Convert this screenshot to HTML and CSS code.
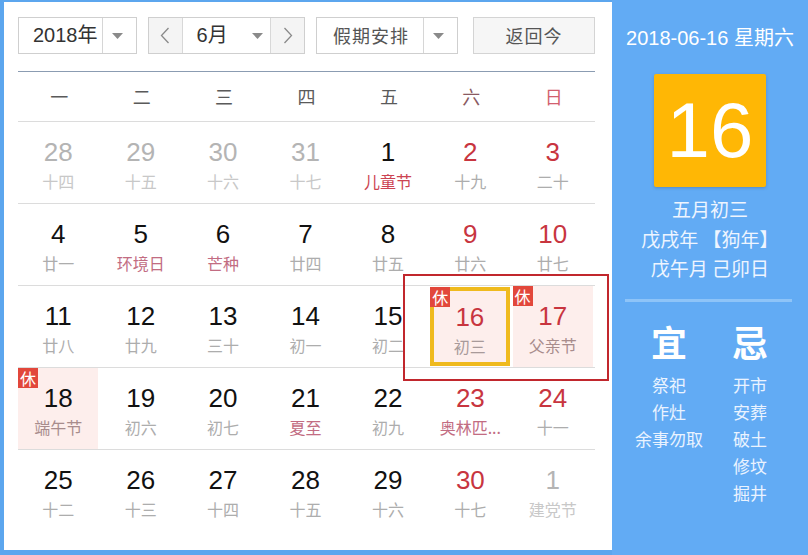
FILE: index.html
```html
<!DOCTYPE html>
<html lang="zh-CN">
<head>
<meta charset="utf-8">
<title>万年历</title>
<link rel="stylesheet" href="styles.css">
</head>
<body>
<div class="app">
  <div class="main">
    <div class="controls">
      <div class="select year">
        <span class="sel-text">2018年</span>
        <span class="sel-arrow"><svg width="11" height="6" viewBox="0 0 11 6"><path d="M0 0H11L5.5 6Z" fill="#8a8a8a"/></svg></span>
      </div>
      <div class="select month">
        <span class="nav-btn"><svg width="10" height="17" viewBox="0 0 10 17"><path d="M8.5 1L1.5 8.5L8.5 16" fill="none" stroke="#8a8a8a" stroke-width="1.3"/></svg></span>
        <span class="month-mid"><span class="sel-text">6月</span><svg class="mid-arrow" width="11" height="6" viewBox="0 0 11 6"><path d="M0 0H11L5.5 6Z" fill="#8a8a8a"/></svg></span>
        <span class="nav-btn"><svg width="10" height="17" viewBox="0 0 10 17"><path d="M1.5 1L8.5 8.5L1.5 16" fill="none" stroke="#8a8a8a" stroke-width="1.3"/></svg></span>
      </div>
      <div class="select holiday">
        <span class="sel-text">假期安排</span>
        <span class="sel-arrow"><svg width="11" height="6" viewBox="0 0 11 6"><path d="M0 0H11L5.5 6Z" fill="#8a8a8a"/></svg></span>
      </div>
      <div class="btn-today">返回今</div>
    </div>

    <div class="week-head">
      <span>一</span><span>二</span><span>三</span><span>四</span><span>五</span><span class="sat">六</span><span class="sun">日</span>
    </div>

    <div class="row">
      <div class="cell other"><div class="num">28</div><div class="lunar">十四</div></div>
      <div class="cell other"><div class="num">29</div><div class="lunar">十五</div></div>
      <div class="cell other"><div class="num">30</div><div class="lunar">十六</div></div>
      <div class="cell other"><div class="num">31</div><div class="lunar">十七</div></div>
      <div class="cell"><div class="num">1</div><div class="lunar fest red">儿童节</div></div>
      <div class="cell weekend"><div class="num">2</div><div class="lunar">十九</div></div>
      <div class="cell weekend"><div class="num">3</div><div class="lunar">二十</div></div>
    </div>
    <div class="row">
      <div class="cell"><div class="num">4</div><div class="lunar">廿一</div></div>
      <div class="cell"><div class="num">5</div><div class="lunar fest">环境日</div></div>
      <div class="cell"><div class="num">6</div><div class="lunar fest">芒种</div></div>
      <div class="cell"><div class="num">7</div><div class="lunar">廿四</div></div>
      <div class="cell"><div class="num">8</div><div class="lunar">廿五</div></div>
      <div class="cell weekend"><div class="num">9</div><div class="lunar">廿六</div></div>
      <div class="cell weekend"><div class="num">10</div><div class="lunar">廿七</div></div>
    </div>
    <div class="row">
      <div class="cell"><div class="num">11</div><div class="lunar">廿八</div></div>
      <div class="cell"><div class="num">12</div><div class="lunar">廿九</div></div>
      <div class="cell"><div class="num">13</div><div class="lunar">三十</div></div>
      <div class="cell"><div class="num">14</div><div class="lunar">初一</div></div>
      <div class="cell"><div class="num">15</div><div class="lunar">初二</div></div>
      <div class="cell weekend rest today"><span class="badge">休</span><div class="num">16</div><div class="lunar">初三</div></div>
      <div class="cell weekend rest"><span class="badge">休</span><div class="num">17</div><div class="lunar hol">父亲节</div></div>
    </div>
    <div class="row">
      <div class="cell rest"><span class="badge">休</span><div class="num">18</div><div class="lunar hol">端午节</div></div>
      <div class="cell"><div class="num">19</div><div class="lunar">初六</div></div>
      <div class="cell"><div class="num">20</div><div class="lunar">初七</div></div>
      <div class="cell"><div class="num">21</div><div class="lunar fest">夏至</div></div>
      <div class="cell"><div class="num">22</div><div class="lunar">初九</div></div>
      <div class="cell weekend"><div class="num">23</div><div class="lunar fest">奥林匹...</div></div>
      <div class="cell weekend"><div class="num">24</div><div class="lunar">十一</div></div>
    </div>
    <div class="row">
      <div class="cell"><div class="num">25</div><div class="lunar">十二</div></div>
      <div class="cell"><div class="num">26</div><div class="lunar">十三</div></div>
      <div class="cell"><div class="num">27</div><div class="lunar">十四</div></div>
      <div class="cell"><div class="num">28</div><div class="lunar">十五</div></div>
      <div class="cell"><div class="num">29</div><div class="lunar">十六</div></div>
      <div class="cell weekend"><div class="num">30</div><div class="lunar">十七</div></div>
      <div class="cell other"><div class="num">1</div><div class="lunar">建党节</div></div>
    </div>
  </div>

  <div class="side">
    <div class="side-date">2018-06-16 星期六</div>
    <div class="big-day">16</div>
    <div class="side-lunar">
      <div>五月初三</div>
      <div>戊戌年 【狗年】</div>
      <div>戊午月 己卯日</div>
    </div>
    <div class="side-sep"></div>
    <div class="yiji">
      <div class="yj-col">
        <div class="yj-title">宜</div>
        <div>祭祀</div><div>作灶</div><div>余事勿取</div>
      </div>
      <div class="yj-col">
        <div class="yj-title">忌</div>
        <div>开市</div><div>安葬</div><div>破土</div><div>修坟</div><div>掘井</div>
      </div>
    </div>
  </div>

  <div class="annot"></div>
</div>
</body>
</html>
```

FILE: styles.css
```css
* { box-sizing: border-box; }
html, body { margin: 0; padding: 0; }
body {
  width: 808px;
  height: 555px;
  overflow: hidden;
  background: #5ca6ee;
  font-family: "Liberation Sans", "Noto Sans CJK SC", sans-serif;
}
.app {
  position: relative;
  display: flex;
  height: 555px;
}
.main {
  width: 608px;
  margin: 2px 0 5px 4px;
  background: #fff;
  padding: 15px 17px 0 14px;
}
.controls {
  display: flex;
  height: 37px;
}
.select {
  display: flex;
  border: 1px solid #cfcfcf;
  background: #fff;
  height: 37px;
  color: #333;
  font-size: 20px;
}
.sel-text { line-height: 35px; }
.year { width: 119px; }
.year .sel-text { width: 83px; padding-left: 14px; }
.sel-arrow {
  flex: 1;
  border-left: 1px solid #d6d6d6;
  display: flex;
  align-items: center;
  justify-content: center;
  padding-right: 4px;
}
.month { width: 157px; margin-left: 11px; }
.nav-btn {
  width: 33px;
  background: #f4f4f4;
  display: flex;
  align-items: center;
  justify-content: center;
}
.month-mid {
  width: 91px;
  border-left: 1px solid #d8d8d8;
  border-right: 1px solid #d8d8d8;
  display: flex;
  align-items: center;
  padding-left: 14px;
}
.mid-arrow { margin-left: 24px; }
.holiday { width: 142px; margin-left: 11px; font-family: "Noto Sans CJK SC", sans-serif; color: #555; font-size: 18px; }
.holiday .sel-text { width: 106px; padding-left: 16px; letter-spacing: 1px; }
.btn-today {
  width: 122px;
  margin-left: 15px;
  border: 1px solid #d4d4d4;
  background: #f6f6f6;
  text-align: center;
  line-height: 35px;
  font-size: 18px;
  color: #555;
  font-family: "Noto Sans CJK SC", sans-serif;
  letter-spacing: 1px;
}
.week-head {
  margin-top: 17px;
  border-top: 1px solid #8b9cb2;
  display: grid;
  grid-template-columns: repeat(7, 1fr);
  height: 50px;
  line-height: 49px;
  text-align: center;
  font-family: "Noto Sans CJK SC", sans-serif;
  font-size: 18px;
  color: #5a5a5a;
}
.week-head .sat { color: #8a5a62; }
.week-head .sun { color: #d2606e; }
.row {
  display: grid;
  grid-template-columns: repeat(7, 1fr);
  border-top: 1px solid #dcdcdc;
  height: 82px;
}
.cell {
  position: relative;
  margin-right: 2px;
  text-align: center;
  padding-top: 15px;
}
.num {
  font-family: "Liberation Sans", sans-serif;
  font-size: 26px;
  line-height: 30px;
  color: #111;
}
.lunar {
  margin-top: 3px;
  font-family: "Noto Sans CJK SC", sans-serif;
  font-size: 16px;
  line-height: 22px;
  color: #adadad;
  white-space: nowrap;
}
.weekend .num { color: #c8353f; }
.other .num { color: #b4b4b4; }
.other .lunar { color: #c8c8c8; }
.lunar.fest { color: #c26c82; }
.lunar.red { color: #cc4452; }
.lunar.hol { color: #a88c8c; }
.rest { background: #fdeeec; }
.today {
  border: 4px solid #efba1e;
  padding-top: 11px;
  margin: 1px 3px 1px 0;
}
.today .lunar { color: #a89a9a; }
.badge {
  position: absolute;
  left: 0;
  top: 0;
  width: 20px;
  height: 20px;
  background: #e2473b;
  color: #fff;
  font-family: "Noto Sans CJK SC", sans-serif;
  font-size: 16px;
  line-height: 20px;
  text-align: center;
}
.today .badge { left: -4px; top: -4px; }

.side {
  flex: 1;
  background: #62abf4;
  color: #fff;
  text-align: center;
  padding-top: 27px;
}
.side-date {
  font-size: 20px;
  line-height: 22px;
  font-family: "Liberation Sans", "Noto Sans CJK SC", sans-serif;
  white-space: nowrap;
}
.big-day {
  width: 112px;
  height: 113px;
  margin: 25px auto 0;
  background: #ffb705;
  box-shadow: 0 1px 3px rgba(60, 80, 120, 0.35);
  border-radius: 2px;
  font-family: "Liberation Sans", sans-serif;
  font-size: 78px;
  line-height: 113px;
  color: #fff;
}
.side-lunar {
  margin-top: 7px;
  font-family: "Noto Sans CJK SC", sans-serif;
  font-size: 19px;
  line-height: 29.5px;
  color: #eef5ff;
  white-space: nowrap;
}
.side-sep {
  height: 3px;
  margin: 16px 16px 0 13px;
  background: #8ec4f8;
}
.yiji {
  display: grid;
  grid-template-columns: 80px 80px;
  column-gap: 1px;
  margin: 17px 0 0 17px;
  font-family: "Noto Sans CJK SC", sans-serif;
  font-size: 17px;
  line-height: 27px;
  color: #eaf3ff;
}
.yj-title {
  font-size: 36px;
  font-weight: bold;
  line-height: 44px;
  color: #fff;
  margin-bottom: 8px;
}
.annot {
  position: absolute;
  left: 403px;
  top: 274px;
  width: 206px;
  height: 107px;
  border: 2px solid #c1272d;
}
```
